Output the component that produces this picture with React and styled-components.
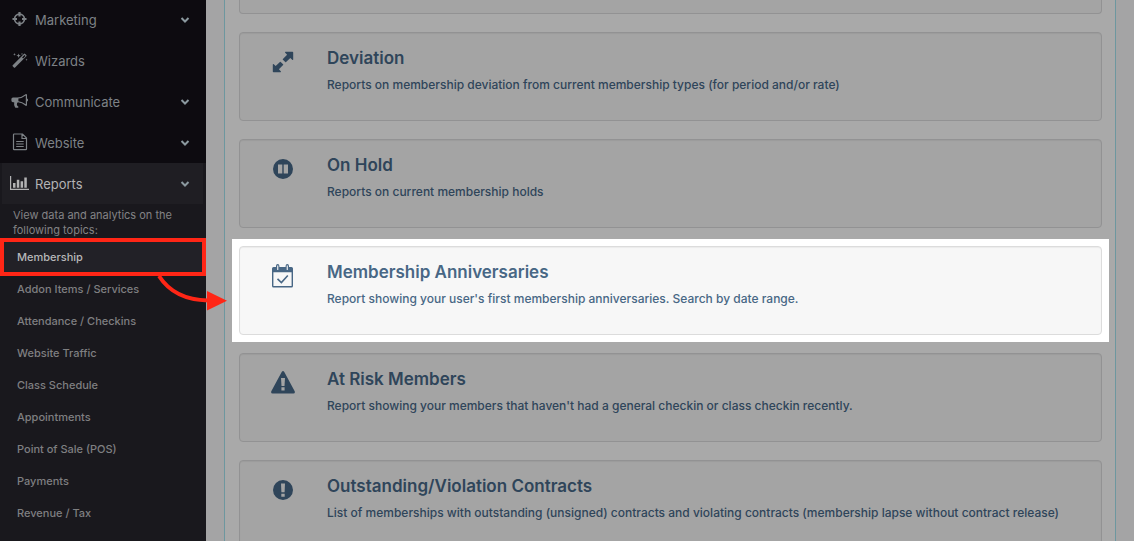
import React from "react";
import styled, { createGlobalStyle } from "styled-components";

const GlobalStyle = createGlobalStyle`
  * {
    box-sizing: border-box;
  }
  body {
    margin: 0;
    background: #a4a4a5;
    font-family: Inter, "Open Sans", sans-serif;
    overflow: hidden;
  }
`;

const Page = styled.div`
  position: relative;
  display: flex;
  height: 100vh;
  overflow: hidden;
`;

const Sidebar = styled.nav`
  width: 206px;
  flex-shrink: 0;
  background-color: #0d0b10;
`;

const MenuButton = styled.button`
  display: flex;
  align-items: center;
  gap: 6px;
  width: 100%;
  height: ${(props) => (props.$first ? "40px" : "41px")};
  padding: 0 16px 0 10px;
  border: 0;
  background: none;
  color: #7d8286;
  font-family: inherit;
  font-size: 13px;
  text-align: left;
  cursor: pointer;

  & > svg:first-child {
    margin-bottom: 2px;
  }
`;

const ActiveMenuButton = styled(MenuButton)`
  width: auto;
  align-self: stretch;
  margin: 0 3px 0 2px;
  padding: 0 13px 0 8px;
  background-color: #1f1e23;
  color: #b3b3b4;
`;

const MenuLabel = styled.span`
  flex: 1;
`;

const SubMenu = styled.div`
  display: flex;
  flex-direction: column;
  height: 100%;
  background-color: #19181d;
`;

const SubMenuText = styled.p`
  margin: 0;
  padding: 4px 32px 0 13px;
  color: #838385;
  font-size: 11px;
  line-height: 15px;
`;

const SubMenuList = styled.ul`
  margin: 0;
  padding: 0;
  list-style: none;
`;

const SubMenuLink = styled.a`
  display: flex;
  align-items: center;
  height: 32px;
  padding: 0 17px;
  color: #7f7f81;
  font-size: 11px;
  font-weight: 500;
  text-decoration: none;
`;

const SelectedLink = styled(SubMenuLink)`
  height: 38px;
  margin-bottom: -3px;
  padding: 0 13px;
  border: 4px solid #ff2616;
  background-color: #222127;
  color: #b8b8b9;
`;

const Main = styled.main`
  flex: 1;
  min-width: 0;
  padding: 0 18px;
`;

const Panel = styled.section`
  display: flex;
  flex-direction: column;
  gap: 4px;
  padding: 0 6px 0 7px;
  border: solid #6d979f;
  border-width: 0 1px;
  background-color: #a9a9a9;
`;

const CardSlot = styled.div`
  padding: 7px;
  background-color: ${(props) => (props.$highlight ? "#fff" : "transparent")};
`;

const PreviousSlot = styled(CardSlot)`
  padding-top: 0;
`;

const PreviousCard = styled.div`
  height: 14px;
  border: 1px solid #929293;
  border-top: 0;
  border-radius: 0 0 4px 4px;
  background-color: #a4a4a4;
`;

const Card = styled.a`
  display: flex;
  height: 89px;
  border: 1px solid ${(props) => (props.$highlight ? "#dcdcdc" : "#929293")};
  border-radius: 4px;
  background-color: ${(props) => (props.$highlight ? "#f7f7f7" : "#a4a4a4")};
  box-shadow: inset 0 1px 1px rgba(0, 0, 0, 0.05);
  color: ${(props) => (props.$highlight ? "#486785" : "#2f455a")};
  text-decoration: none;
`;

const CardIcon = styled.div`
  display: flex;
  align-items: center;
  justify-content: center;
  width: 85px;
  height: 58px;
  margin-right: 2px;
  flex-shrink: 0;
`;

const CardBody = styled.div`
  padding-top: 13px;
  white-space: nowrap;
`;

const CardTitle = styled.h2`
  margin: 0;
  font-size: 17px;
  font-weight: 600;
  line-height: 24px;
`;

const CardText = styled.p`
  margin: 6px 0 0;
  font-size: 12px;
  font-weight: 500;
  line-height: 18px;
`;

const Arrow = styled.svg`
  position: absolute;
  top: 274px;
  left: 154px;
`;

const CrosshairIcon = () => (
  <svg width="19" height="18" viewBox="0 0 19 18" fill="none" stroke="currentColor">
    <circle cx="9.5" cy="9" r="4.9" strokeWidth="1.7" />
    <path d="M9.5 2v4.5M9.5 11.500v4.500M2.500 9H7M12 9h4.500" strokeWidth="2.200" />
  </svg>
);

const WandIcon = () => (
  <svg width="19" height="18" viewBox="0 0 19 18" fill="currentColor">
    <path d="M2.700 14.200 13.900 2.900q.6-.6 1.200 0l1.200 1.200q.6.6 0 1.200L5.100 16.500q-.6.600-1.200 0l-1.200-1.200q-.5-.6 0-1.100ZM12.100 6.400l1.100 1.100 2.300-2.500-1-1Z" fillRule="evenodd" />
    <path d="m4.500 2 .4 1 1 .4-1 .4-.4 1-.4-1-1-.4 1-.4ZM8.600 2.500l.6 1.600 1.600.6-1.600.6-.6 1.600L8 5.300l-1.600-.6L8 4.100ZM12 1.800l.3.900.9.300-.9.300-.3.900-.3-.9-.9-.300.9-.3ZM16.500 7.500l.3.900.9.300-.9.300-.3.900-.3-.9-.9-.3.900-.3Z" />
  </svg>
);

const BullhornIcon = () => (
  <svg width="19" height="18" viewBox="0 0 19 18" fill="currentColor">
    <path d="M16 2q1 0 1 1v3.600q1.100.2 1.100 1.500T17 9.600V13q0 1-1 1-4.200-3.500-8-3.700-1.300.5-1 1.700-.6 1 .6 2 .5.400 1.100.900-1 1.300-3.600.6Q3.600 13 4.200 10.200H3q-1.600 0-1.600-1.600V7.100Q1.400 5.500 3 5.500h4.300Q11.600 5.500 16 2Zm-.2 1.600Q12.200 6.200 8.400 6.600v2.600q3.800.4 7.400 3.100Z" />
  </svg>
);

const FileIcon = () => (
  <svg width="19" height="20" viewBox="0 0 19 20" fill="none" stroke="currentColor">
    <path d="M4.500 2h8l4 4v11q0 .7-.7.7H4.200q-.7 0-.7-.7V2.700q0-.7.7-.7ZM12 2v4.500h4.500" strokeWidth="1.200" />
    <path d="M6.200 9.500h7.500M6.200 12h7.500M6.200 14.500h7.500" strokeWidth="1.100" />
  </svg>
);

const ChartIcon = () => (
  <svg width="19" height="18" viewBox="0 0 19 18" fill="currentColor">
    <path d="M0 2h1.200v12.800H19V16H0ZM3 9h2.500v4.700H3ZM6.800 5.700h2.500v8H6.800ZM10.600 7.300h2.500v6.400h-2.500ZM14.300 3.500h2.500v10.200h-2.500Z" />
  </svg>
);

const ChevronIcon = () => (
  <svg width="10" height="8" viewBox="0 0 10 8" fill="none" stroke="#8b999f" strokeWidth="2">
    <path d="m1.500 2 3.500 3.500L8.500 2" />
  </svg>
);

const ExpandIcon = () => (
  <svg width="22" height="22" viewBox="0 0 22 22" fill="currentColor">
    <path d="M13.600.8h6.900q.7 0 .7.700v6.900q-.2 1-1 .4l-1.900-1.900-4.200 4.200q-.4.400-.8 0l-2.400-2.400q-.4-.4 0-.8l4.200-4.200-1.900-1.900q-.6-.8.400-1ZM.8 13.600q.2-1 1-.4l1.900 1.900 4.200-4.200q.4-.4.8 0l2.400 2.400q.4.400 0 .8l-4.200 4.200 1.900 1.900q.6.800-.4 1H1.500q-.7 0-.7-.7Z" />
  </svg>
);

const PauseIcon = () => (
  <svg width="20" height="20" viewBox="0 0 20 20" fill="currentColor" fillRule="evenodd">
    <path d="M10 0a10 10 0 1 0 0 20 10 10 0 0 0 0-20ZM5 5.500h4.300v9H5ZM10.700 5.500H15v9h-4.300Z" />
  </svg>
);

const CalendarIcon = () => (
  <svg width="24" height="24" viewBox="0 0 24 24" fill="currentColor" fillRule="evenodd">
    <path d="M2.500 3H5V2q0-2 1.700-2t1.700 2v1h6.200V2q0-2 1.700-2T18 2v1h2.500Q22 3 22 4.500V22q0 1.500-1.500 1.500h-18Q1 23.500 1 22V4.500Q1 3 2.500 3ZM2.400 8.200V22h18.200V8.200ZM6.200 1.600v4.300h1.100V1.600ZM15.700 1.600v4.300h1.100V1.600Z" />
    <path d="m6.500 14.800 3.900 3.700 6.400-7" fill="none" stroke="currentColor" strokeWidth="1.600" />
  </svg>
);

const WarningIcon = () => (
  <svg width="24" height="25" viewBox="0 0 24 25" fill="currentColor" fillRule="evenodd">
    <path d="M10.700.9q1.300-1.700 2.600 0L23.700 20.300q.7 1.900-1.300 2.200H1.600Q-.4 22.200.3 20.300ZM10 7l.5 8h3l.5-8ZM10.400 16.300v3.200h3.200v-3.200Z" />
  </svg>
);

const ExclamationIcon = () => (
  <svg width="20" height="20" viewBox="0 0 20 20" fill="currentColor" fillRule="evenodd">
    <path d="M10 0a10 10 0 1 0 0 20 10 10 0 0 0 0-20ZM8 3.500h4l-.4 8.700H8.400ZM8.300 13.700h3.400v3H8.300Z" />
  </svg>
);

const menuItems = [
  { label: "Marketing", icon: <CrosshairIcon />, expandable: true },
  { label: "Wizards", icon: <WandIcon /> },
  { label: "Communicate", icon: <BullhornIcon />, expandable: true },
  { label: "Website", icon: <FileIcon />, expandable: true },
];

const topics = [
  "Addon Items / Services",
  "Attendance / Checkins",
  "Website Traffic",
  "Class Schedule",
  "Appointments",
  "Point of Sale (POS)",
  "Payments",
  "Revenue / Tax",
];

const reports = [
  {
    title: "Deviation",
    text: "Reports on membership deviation from current membership types (for period and/or rate)",
    icon: <ExpandIcon />,
  },
  {
    title: "On Hold",
    text: "Reports on current membership holds",
    icon: <PauseIcon />,
  },
  {
    title: "Membership Anniversaries",
    text: "Report showing your user's first membership anniversaries. Search by date range.",
    icon: <CalendarIcon />,
    highlight: true,
  },
  {
    title: "At Risk Members",
    text: "Report showing your members that haven't had a general checkin or class checkin recently.",
    icon: <WarningIcon />,
  },
  {
    title: "Outstanding/Violation Contracts",
    text: "List of memberships with outstanding (unsigned) contracts and violating contracts (membership lapse without contract release)",
    icon: <ExclamationIcon />,
  },
];

export default function App() {
  return (
    <Page>
      <GlobalStyle />
      <Sidebar>
        {menuItems.map((item, index) => (
          <MenuButton key={item.label} type="button" $first={index === 0}>
            {item.icon}
            <MenuLabel>{item.label}</MenuLabel>
            {item.expandable && <ChevronIcon />}
          </MenuButton>
        ))}
        <SubMenu>
          <ActiveMenuButton type="button" aria-expanded="true">
            <ChartIcon />
            <MenuLabel>Reports</MenuLabel>
            <ChevronIcon />
          </ActiveMenuButton>
          <SubMenuText>View data and analytics on the following topics:</SubMenuText>
          <SubMenuList>
            <li>
              <SelectedLink href="#membership">Membership</SelectedLink>
            </li>
            {topics.map((topic) => (
              <li key={topic}>
                <SubMenuLink href="#topic">{topic}</SubMenuLink>
              </li>
            ))}
          </SubMenuList>
        </SubMenu>
      </Sidebar>
      <Main>
        <Panel>
          <PreviousSlot>
            <PreviousCard />
          </PreviousSlot>
          {reports.map((report) => (
            <CardSlot key={report.title} $highlight={report.highlight}>
              <Card href="#report" $highlight={report.highlight}>
                <CardIcon>{report.icon}</CardIcon>
                <CardBody>
                  <CardTitle>{report.title}</CardTitle>
                  <CardText>{report.text}</CardText>
                </CardBody>
              </Card>
            </CardSlot>
          ))}
        </Panel>
      </Main>
      <Arrow width="74" height="38" viewBox="0 0 74 38" aria-hidden="true">
        <path d="M5 2C14 16 29 26 54 26.500" fill="none" stroke="#ff2616" strokeWidth="4" />
        <path d="M53 17v19.500l20-9.800Z" fill="#ff2616" />
      </Arrow>
    </Page>
  );
}
